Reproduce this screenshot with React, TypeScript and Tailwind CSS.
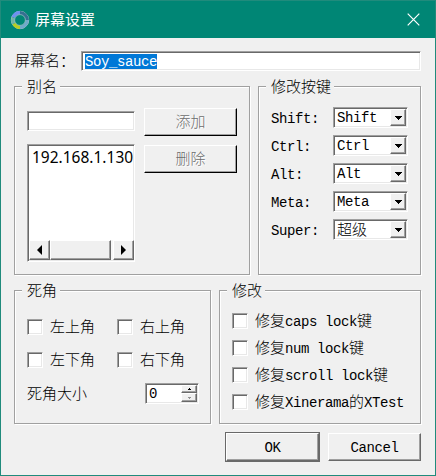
import React from "react";

const SUNKEN =
  "border border-t-[#a0a0a0] border-l-[#a0a0a0] border-r-white border-b-white bg-white p-px shadow-[inset_1px_1px_0_#696969,inset_-1px_-1px_0_#e8e8e8]";
const RAISED =
  "border border-t-white border-l-white border-r-[#696969] border-b-[#696969] bg-[#f0f0f0] shadow-[inset_-1px_-1px_0_#a0a0a0]";

/** Splits a label into Latin and Chinese runs, which use different metrics. */
function Label({ text, className = "" }: { text: string; className?: string }) {
  const runs = text.match(/[\x00-\x7f]+|[^\x00-\x7f]+/g) ?? [];
  return (
    <span className={`flex items-center whitespace-pre ${className}`}>
      {runs.map((run, i) =>
        run.charCodeAt(0) < 128 ? (
          <span key={i} className="pt-0.5 font-['Liberation_Mono',monospace] text-[14px] leading-[17px] tracking-[-0.4px]">{run}</span>
        ) : (
          <span key={i} className="pb-0.5 font-['Noto_Sans_CJK_SC',sans-serif] text-[15px] font-light leading-4">{run}</span>
        )
      )}
    </span>
  );
}

function Group({ title, className = "", children }: { title: string; className?: string; children: React.ReactNode }) {
  return (
    <section className={`flex flex-col border border-[#a0a0a0] shadow-[1px_1px_0_white,inset_1px_1px_0_white] ${className}`}>
      <h2 className="-mt-[9px] ml-[7px] h-[18px] self-start bg-[#f0f0f0] pl-[5px] pr-[3px]">
        <Label text={title} />
      </h2>
      {children}
    </section>
  );
}

function Check({ text }: { text: string }) {
  return (
    <label className="flex h-4 items-center">
      <span className={`size-4 shrink-0 ${SUNKEN}`} />
      <Label text={text} className="ml-[7px]" />
    </label>
  );
}

function ModifierRow({ name, value }: { name: string; value: string }) {
  return (
    <div className="flex h-[21px] items-center">
      <Label text={name} className="w-[62px] pt-px" />
      <div className={`flex h-[21px] w-[75px] justify-between ${SUNKEN}`}>
        <Label text={value} className="ml-0.5" />
        <span className={`flex w-4 items-center justify-center ${RAISED}`}>
          <svg width="7" height="4" shapeRendering="crispEdges"><path d="M0 0h7L3.5 4z" /></svg>
        </span>
      </div>
    </div>
  );
}

function DisabledButton({ text }: { text: string }) {
  return (
    <button className="flex h-7 w-[93px] items-center justify-center border border-t-white border-l-white border-r-black border-b-black bg-[#f0f0f0] text-[#6d6d6d] shadow-[inset_-1px_-1px_0_#a0a0a0] [text-shadow:1px_1px_0_white]">
      <Label text={text} />
    </button>
  );
}

export default function App() {
  return (
    <div className="flex h-[476px] w-[436px] flex-col overflow-hidden border border-[#208b7c] bg-[#f0f0f0] font-['Liberation_Mono','Noto_Sans_CJK_SC',monospace] text-black">
      <header className="flex h-[37px] shrink-0 items-center bg-[#008675] pl-[9px] pr-[15px] text-white">
        <svg width="20" height="20" viewBox="0 0 20 20" fill="none" strokeWidth="3.4">
          <circle cx="10" cy="10" r="8.7" stroke="#b4c8cf" strokeWidth="1" />
          <path d="M3.2 7.5A7.2 7.2 0 0 1 10 2.8" stroke="#6e91ef" />
          <path d="M10 2.8A7.2 7.2 0 0 1 17.2 10" stroke="#356f91" />
          <path d="M17.2 10A7.2 7.2 0 0 1 10 17.2" stroke="#6fa9cb" />
          <path d="M10 17.2A7.2 7.2 0 0 1 3.8 13.6" stroke="#b8cf22" />
          <path d="M3.8 13.6A7.2 7.2 0 0 1 3.2 7.5" stroke="#6fb6a4" />
          <circle cx="10" cy="10" r="5.4" stroke="#a9c6cc" strokeWidth=".7" />
        </svg>
        <h1 className="-mt-px ml-[5px] font-['Noto_Sans_CJK_SC',sans-serif] text-[15px] leading-5">屏幕设置</h1>
        <svg className="ml-auto" width="13" height="13" viewBox="0 0 13 13" stroke="white" strokeWidth="1.2">
          <path d="M.7.7l11.6 11.6M12.3.7L.7 12.3" />
        </svg>
      </header>

      <main className="flex flex-col pl-[13px] pt-[13px]">
        <div className="flex h-5 items-center">
          <Label text="屏幕名：" className="w-[67px] pl-px" />
          <div className={`flex h-5 w-[340px] items-center ${SUNKEN}`}>
            <span className="ml-0.5 flex h-[15px] items-center bg-[#0078d7] text-white"><Label text="Soy_sauce" /></span>
          </div>
        </div>

        <div className="mt-[15px] flex gap-2">
          <Group title="别名" className="h-[189px] w-[236px]">
            <div className="ml-3 mt-3 flex gap-[9px]">
              <div className="flex flex-col pt-[3px]">
                <div className={`h-5 w-[108px] ${SUNKEN}`} />
                <div className={`mt-[13px] flex h-[118px] w-[108px] flex-col justify-between ${SUNKEN}`}>
                  <span className="ml-[3px] mt-px w-[102px] overflow-hidden font-['Noto_Sans',sans-serif] text-[15.5px] leading-5">192.168.1.130</span>
                  <div className="-mr-px flex h-5 shrink-0 bg-[#f7f7f7]">
                    <span className={`flex w-[21px] items-center justify-center ${RAISED}`}>
                      <svg width="5" height="10"><path d="M5 0v10L0 5z" /></svg>
                    </span>
                    <span className={`w-[61px] ${RAISED}`} />
                    <span className={`ml-auto flex w-[21px] items-center justify-center ${RAISED}`}>
                      <svg width="5" height="10"><path d="M0 0v10l5-5z" /></svg>
                    </span>
                  </div>
                </div>
              </div>
              <div className="flex flex-col gap-[9px]">
                <DisabledButton text="添加" />
                <DisabledButton text="删除" />
              </div>
            </div>
          </Group>

          <Group title="修改按键" className="h-[189px] w-[163px]">
            <div className="ml-3 mt-[11px] flex flex-col gap-[7px]">
              <ModifierRow name="Shift:" value="Shift" />
              <ModifierRow name="Ctrl:" value="Ctrl" />
              <ModifierRow name="Alt:" value="Alt" />
              <ModifierRow name="Meta:" value="Meta" />
              <ModifierRow name="Super:" value="超级" />
            </div>
          </Group>
        </div>

        <div className="mt-[15px] flex gap-2">
          <Group title="死角" className="h-[134px] w-[197px]">
            <div className="ml-3 mt-[19px] grid grid-cols-[90px_90px] gap-y-[17px]">
              <Check text="左上角" />
              <Check text="右上角" />
              <Check text="左下角" />
              <Check text="右下角" />
            </div>
            <div className="ml-3 mt-[15px] flex h-[21px] items-center">
              <Label text="死角大小" className="w-[118px]" />
              <div className={`flex h-[21px] w-[54px] items-center justify-between ${SUNKEN}`}>
                <Label text="0" className="ml-0.5" />
                <div className="flex w-4 flex-col">
                  <span className={`flex h-2 items-center justify-center ${RAISED}`}>
                    <svg width="3" height="2" shapeRendering="crispEdges"><path d="M1 0h1v1h1v1H0V1h1z" /></svg>
                  </span>
                  <span className={`flex h-[9px] items-center justify-center ${RAISED}`}>
                    <svg width="3" height="2" fill="#909090" shapeRendering="crispEdges"><path d="M0 0h3v1H2v1H1V1H0z" /></svg>
                  </span>
                </div>
              </div>
            </div>
          </Group>

          <Group title="修改" className="h-[134px] w-[202px]">
            <div className="ml-3 mt-[13px] flex flex-col gap-[11px]">
              <Check text="修复caps lock键" />
              <Check text="修复num lock键" />
              <Check text="修复scroll lock键" />
              <Check text="修复Xinerama的XTest" />
            </div>
          </Group>
        </div>

        <div className="mt-2 flex items-center gap-2 pl-[211px]">
          <div className="h-[30px] w-[95px] border border-[#696969]">
            <button className={`flex size-full items-center justify-center ${RAISED}`}><Label text="OK" /></button>
          </div>
          <button className={`flex h-7 w-[93px] items-center justify-center ${RAISED}`}><Label text="Cancel" /></button>
        </div>
      </main>
    </div>
  );
}
